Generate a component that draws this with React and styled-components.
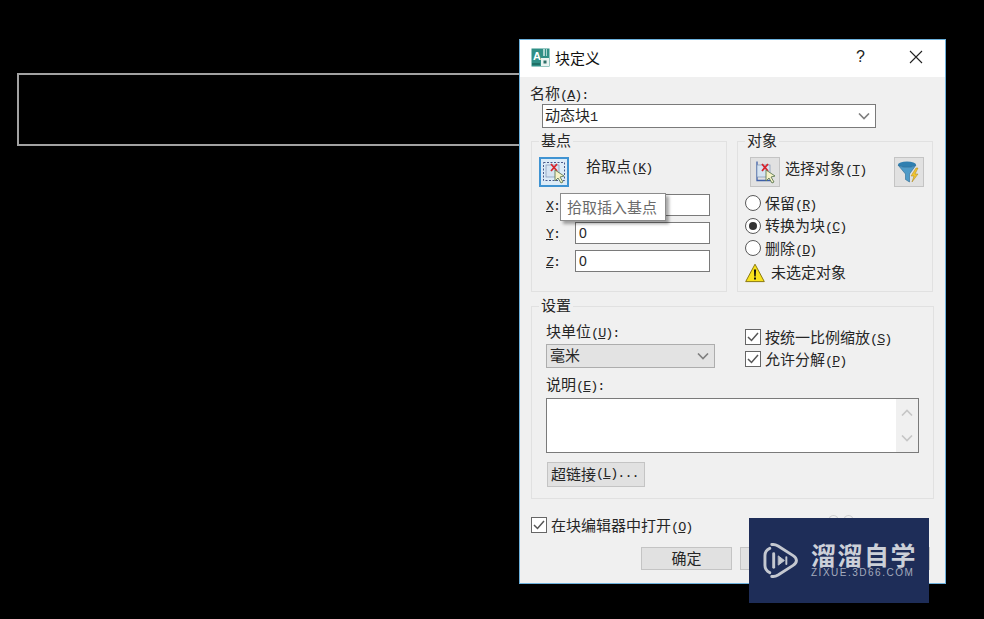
import styled, { createGlobalStyle } from "styled-components";

const GlobalStyle = createGlobalStyle`
  html, body {
    margin: 0;
    height: 100%;
    background: #000;
  }
  * {
    box-sizing: border-box;
  }
`;

const Canvas = styled.div`
  position: relative;
  width: 984px;
  height: 619px;
  overflow: hidden;
  background: #000;
  font-family: "Noto Sans CJK SC", "Liberation Sans", sans-serif;
  font-size: 15px;
  color: #262626;
`;
const DrawnRect = styled.div`
  position: absolute;
  left: 17px;
  top: 73px;
  width: 520px;
  height: 73px;
  border: 2px solid #a2a2a2;
`;

// dialog window
const Dialog = styled.div`
  position: absolute;
  left: 519px;
  top: 39px;
  width: 427px;
  height: 545px;
  border: 1px solid #6db1dc;
  background: #f0f0f0;
`;
const TitleBar = styled.div`
  display: flex;
  align-items: center;
  height: 37px;
  padding: 0 0 3px 11px;
  background: #fff;
`;
const TitleText = styled.span`
  margin-left: 5px;
  color: #111;
`;
const HelpMark = styled.span`
  margin-left: auto;
  width: 14px;
  font-family: "Liberation Sans", sans-serif;
  font-size: 16px;
  color: #222;
`;
const CloseMark = styled.span`
  display: flex;
  margin: 0 22px 0 39px;
`;
const Body = styled.div`
  padding: 7px 0 0 10px;
`;
const Line = styled.div`
  height: 20px;
  line-height: 18px;
  white-space: nowrap;
`;
const Label = styled.span`
  margin-top: -2px;
  white-space: nowrap;
`;
const Hot = styled.span`
  font-family: "Liberation Mono", monospace;
  font-size: 13.5px;
  letter-spacing: -1px;
`;
const Combo = styled.div`
  display: flex;
  align-items: center;
  justify-content: space-between;
  width: ${(p) => p.$width}px;
  height: 24px;
  margin: ${(p) => p.$top || 0}px 0 0 ${(p) => p.$indent || 0}px;
  padding: 0 5px 0 ${(p) => (p.$flat ? 3 : 2)}px;
  border: 1px solid ${(p) => (p.$flat ? "#adadad" : "#7a7a7a")};
  background: ${(p) => (p.$flat ? "#e3e3e3" : "#fff")};
`;
const ComboText = styled.span`
  margin-top: -3px;
`;
const Columns = styled.div`
  display: grid;
  grid-template-columns: 196px 196px;
  column-gap: 10px;
  margin: 13px 0 0 1px;
`;
const Group = styled.div`
  position: relative;
  height: 151px;
  padding: 15px 0 0 7px;
  border: 1px solid #e1e1e1;
`;
const Legend = styled.span`
  position: absolute;
  left: 7px;
  top: -12px;
  padding: 0 2px;
  line-height: 20px;
  background: #f0f0f0;
`;
const IconRow = styled.div`
  display: flex;
  align-items: center;
  height: 30px;
`;
const IconButton = styled.div`
  display: flex;
  align-items: center;
  justify-content: center;
  flex: none;
  width: 30px;
  height: 30px;
  margin-left: ${(p) => p.$indent || 0}px;
  border: ${(p) => (p.$active ? "2px solid #3f93d2" : "1px solid #c4c4c4")};
  background: ${(p) => (p.$active ? "#dcebf7" : "#e1e1e1")};
`;
const RowLabel = styled.span`
  margin-left: ${(p) => p.$gap}px;
  margin-top: ${(p) => p.$rise}px;
  white-space: nowrap;
`;
const FilterSlot = styled.div`
  margin: 0 8px 0 auto;
`;
const Coords = styled.div`
  display: grid;
  grid-template-columns: 29px 135px;
  grid-auto-rows: 22px;
  row-gap: 6px;
  align-items: center;
  margin: 7px 0 0 7px;
`;
const CoordLabel = styled(Hot)`
  margin-top: 3px;
`;
const Input = styled.div`
  height: 22px;
  padding-left: 3px;
  border: 1px solid #7a7a7a;
  background: #fff;
  line-height: 20px;
  font-family: "Liberation Sans", sans-serif;
  font-size: 14px;
`;
const Tooltip = styled.div`
  position: absolute;
  left: 28px;
  top: 51px;
  width: 106px;
  height: 28px;
  border: 1px solid #8c8c8c;
  background: #fff;
  padding-left: 6px;
  line-height: 25px;
  color: #6b6b6b;
  white-space: nowrap;
  box-shadow: 3px 3px 3px rgba(0, 0, 0, 0.35);
`;
const Options = styled.div`
  display: flex;
  flex-direction: column;
  margin-top: 5px;
`;
const OptionRow = styled.div`
  display: flex;
  align-items: center;
  gap: 4px;
  height: 22.5px;
`;
const Radio = styled.span`
  display: flex;
  align-items: center;
  justify-content: center;
  width: 16px;
  height: 16px;
  border: 1px solid #5a5a5a;
  border-radius: 50%;
  background: #fff;
  &::after {
    content: "";
    display: ${(p) => (p.$on ? "block" : "none")};
    width: 8px;
    height: 8px;
    border-radius: 50%;
    background: #333;
  }
`;
const WarnRow = styled.div`
  display: flex;
  align-items: center;
  gap: 6px;
  height: 20px;
  margin-top: 3px;
`;
const Settings = styled.div`
  position: relative;
  width: 403px;
  height: 193px;
  margin: 14px 0 0 1px;
  padding: 15px 0 0 14px;
  border: 1px solid #e1e1e1;
`;
const SettingsTop = styled.div`
  display: grid;
  grid-template-columns: 169px 170px;
  column-gap: 30px;
`;
const CheckList = styled.div`
  display: flex;
  flex-direction: column;
  gap: 2px;
  padding-top: 5px;
`;
const CheckRow = styled.div`
  display: flex;
  align-items: center;
  gap: 4px;
  height: 20px;
`;
const Check = styled.span`
  display: flex;
  flex: none;
  width: 16px;
  height: 16px;
  border: 1px solid #666;
  background: #fff;
`;
const DescLabel = styled(Line)`
  margin: 6px 0 3px;
`;
const TextArea = styled.div`
  display: flex;
  justify-content: flex-end;
  width: 373px;
  height: 55px;
  border: 1px solid #7a7a7a;
  background: #fff;
`;
const ScrollTrack = styled.div`
  display: flex;
  flex-direction: column;
  align-items: center;
  justify-content: space-between;
  width: 22px;
  padding: 10px 0;
  background: #f0f0f0;
`;
const PushButton = styled.div`
  display: flex;
  align-items: center;
  justify-content: ${(p) => (p.$left ? "flex-start" : "center")};
  width: ${(p) => p.$width}px;
  height: ${(p) => p.$height}px;
  margin: ${(p) => (p.$left ? "9px 0 0 1px" : "0")};
  padding: 0 0 2px ${(p) => (p.$left ? 3 : 0)}px;
  border: 1px solid #c4c4c4;
  background: #e1e1e1;
  white-space: nowrap;
`;
const BottomRow = styled.div`
  display: flex;
  align-items: center;
  gap: 4px;
  height: 20px;
  margin: 16px 0 0 1px;
`;
const FaintDots = styled.div`
  display: flex;
  gap: 4px;
  margin: -9px 0 0 132px;
`;
const FaintDot = styled.span`
  width: 11px;
  height: 12px;
  border: 1px solid #cfcfcf;
  border-radius: 50%;
`;
const ButtonRow = styled.div`
  display: flex;
  gap: 8px;
  margin: 12px 0 0 111px;
`;

// watermark
const Watermark = styled.div`
  position: absolute;
  left: 749px;
  top: 518px;
  display: flex;
  align-items: center;
  width: 180px;
  height: 85px;
  padding-left: 14px;
  background: #1e2d58;
`;
const Brand = styled.div`
  display: flex;
  flex-direction: column;
  margin: -2px 0 0 13px;
`;
const BrandName = styled.span`
  font-size: 25px;
  font-weight: 700;
  line-height: 26px;
  letter-spacing: 1.5px;
  color: #ccd0d8;
  white-space: nowrap;
`;
const BrandUrl = styled.span`
  font-family: "Liberation Sans", sans-serif;
  font-size: 10px;
  line-height: 12px;
  letter-spacing: 1.5px;
  color: #a4abbd;
  white-space: nowrap;
`;

const Chevron = ({ dir = "down", faint }) => (
  <svg width="12" height="7" viewBox="0 0 12 7" fill="none" stroke={faint ? "#c6c6c6" : "#7f7f7f"} strokeWidth="1.6">
    <path d={dir === "up" ? "M1 6.500l5-5 5 5" : "M1 .5l5 5 5-5"} />
  </svg>
);

const CheckMark = () => (
  <svg width="14" height="14" viewBox="0 0 14 14" fill="none" stroke="#555" strokeWidth="1.5">
    <path d="M2 7l3.500 3.500L12 3" />
  </svg>
);

const AppIcon = () => (
  <svg width="19" height="19" viewBox="0 0 19 19">
    <rect x="0.5" y="0.5" width="18" height="18" fill="#2f8f86" />
    <path d="M12 1h2v7h-2zM15 1h1v7h-1z" fill="#a8d4cf" />
    <text x="2" y="12" fontFamily="Liberation Sans" fontWeight="700" fontSize="11" fill="#fff">A</text>
    <rect x="10" y="10" width="8" height="8" fill="#e9f3f1" />
    <rect x="12.500" y="12.500" width="3" height="3" fill="#2f6f68" />
    <path d="M1 15h8v2H1z" fill="#1f6f66" />
  </svg>
);

const PickIcon = ({ dashed }) => (
  <svg width="26" height="26" viewBox="0 0 26 26" fill="none">
    {dashed ? (
      <rect x="2.500" y="3.500" width="21" height="18" stroke="#4a5a8a" strokeDasharray="2 1.500" />
    ) : (
      <path d="M5 2.500v19h15" stroke="#3c5fa8" strokeWidth="1.300" />
    )}
    <rect x="5" y="6" width="13" height="12" fill="#d6e4f2" stroke="#7d93b5" strokeWidth="0.7" />
    <path d="M10 5l6 7M16 5l-6 7" stroke="#d8252c" strokeWidth="1.800" />
    <path d="M14 11l0 11 3-3 3 5 2-1-3-5 4-1z" fill="#f6f2c8" stroke="#5f7a52" strokeWidth="0.9" />
  </svg>
);

const FilterIcon = () => (
  <svg width="26" height="26" viewBox="0 0 26 26">
    <ellipse cx="11" cy="5.500" rx="9" ry="3" fill="#2f7fb0" />
    <path d="M2 6c3 3 15 3 18 0l-6.500 9v8l-4-2.500V15z" fill="#4f9bc8" stroke="#2a6a94" strokeWidth="0.6" />
    <path d="M20 9l-5 8h3l-2 6 6-8h-3l3-6z" fill="#f2c530" stroke="#a98416" strokeWidth="0.5" />
  </svg>
);

const WarnIcon = () => (
  <svg width="20" height="20" viewBox="0 0 20 20">
    <path d="M10 1.200L19.300 18.600H0.700z" fill="#f8e21c" stroke="#8c7a10" strokeWidth="1" strokeLinejoin="round" />
    <path d="M8.900 6.500h2.200l-.4 7h-1.400z" fill="#111" />
    <rect x="9" y="14.500" width="2" height="2" fill="#111" />
  </svg>
);

const PlayLogo = () => (
  <svg width="35" height="37" viewBox="0 0 36 38" fill="none" stroke="#c4c8d0" strokeWidth="3" strokeLinejoin="round" strokeLinecap="round">
    <path d="M9 2.500h1.500c2 0 3 .4 5 1.600L31 14c4.500 3 4.500 7 0 10L15.500 34c-2 1.200-3 1.500-5 1.500H9" />
    <path d="M7 6.500C3.500 8 2 10.500 2 14v10c0 3.500 1.500 6 5 7.500" />
    <path d="M11 12v14" />
    <path d="M16 14.500l6 4.500-6 4.500z" fill="#c4c8d0" strokeWidth="1" />
    <path d="M24 15.500v7" strokeWidth="2" />
  </svg>
);

export default function App() {
  return (
    <Canvas>
      <GlobalStyle />
      <DrawnRect />
      <Dialog>
        <TitleBar>
          <AppIcon />
          <TitleText>块定义</TitleText>
          <HelpMark>?</HelpMark>
          <CloseMark>
            <svg width="14" height="14" viewBox="0 0 14 14" stroke="#222" strokeWidth="1.100">
              <path d="M1 1l12 12M13 1L1 13" />
            </svg>
          </CloseMark>
        </TitleBar>
        <Body>
          <Line>
            名称<Hot>(<u>A</u>):</Hot>
          </Line>
          <Combo $width={334} $indent={12}>
            <ComboText>动态块<Hot>1</Hot></ComboText>
            <Chevron />
          </Combo>
          <Columns>
            <Group>
              <Legend>基点</Legend>
              <IconRow>
                <IconButton $active>
                  <PickIcon dashed />
                </IconButton>
                <RowLabel $gap={17} $rise={-14}>
                  拾取点<Hot>(<u>K</u>)</Hot>
                </RowLabel>
              </IconRow>
              <Coords>
                <CoordLabel><u>X</u>:</CoordLabel>
                <Input />
                <CoordLabel><u>Y</u>:</CoordLabel>
                <Input>0</Input>
                <CoordLabel><u>Z</u>:</CoordLabel>
                <Input>0</Input>
              </Coords>
              <Tooltip>拾取插入基点</Tooltip>
            </Group>
            <Group>
              <Legend>对象</Legend>
              <IconRow>
                <IconButton $indent={5}>
                  <PickIcon />
                </IconButton>
                <RowLabel $gap={5} $rise={-10}>
                  选择对象<Hot>(<u>T</u>)</Hot>
                </RowLabel>
                <FilterSlot>
                  <IconButton>
                    <FilterIcon />
                  </IconButton>
                </FilterSlot>
              </IconRow>
              <Options>
                <OptionRow>
                  <Radio />
                  <Label>保留<Hot>(<u>R</u>)</Hot></Label>
                </OptionRow>
                <OptionRow>
                  <Radio $on />
                  <Label>转换为块<Hot>(<u>C</u>)</Hot></Label>
                </OptionRow>
                <OptionRow>
                  <Radio />
                  <Label>删除<Hot>(<u>D</u>)</Hot></Label>
                </OptionRow>
              </Options>
              <WarnRow>
                <WarnIcon />
                <Label>未选定对象</Label>
              </WarnRow>
            </Group>
          </Columns>
          <Settings>
            <Legend>设置</Legend>
            <SettingsTop>
              <div>
                <Line>
                  块单位<Hot>(<u>U</u>):</Hot>
                </Line>
                <Combo $width={169} $flat $top={2}>
                  <ComboText>毫米</ComboText>
                  <Chevron />
                </Combo>
              </div>
              <CheckList>
                <CheckRow>
                  <Check><CheckMark /></Check>
                  <Label>按统一比例缩放<Hot>(<u>S</u>)</Hot></Label>
                </CheckRow>
                <CheckRow>
                  <Check><CheckMark /></Check>
                  <Label>允许分解<Hot>(<u>P</u>)</Hot></Label>
                </CheckRow>
              </CheckList>
            </SettingsTop>
            <DescLabel>
              说明<Hot>(<u>E</u>):</Hot>
            </DescLabel>
            <TextArea>
              <ScrollTrack>
                <Chevron dir="up" faint />
                <Chevron faint />
              </ScrollTrack>
            </TextArea>
            <PushButton $width={98} $height={25} $left>
              超链接<Hot>(<u>L</u>)...</Hot>
            </PushButton>
          </Settings>
          <BottomRow>
            <Check><CheckMark /></Check>
            <Label>在块编辑器中打开<Hot>(<u>O</u>)</Hot></Label>
            <FaintDots>
              <FaintDot />
              <FaintDot />
            </FaintDots>
          </BottomRow>
          <ButtonRow>
            <PushButton $width={91} $height={23}>确定</PushButton>
            <PushButton $width={91} $height={23} />
            <PushButton $width={91} $height={23} />
          </ButtonRow>
        </Body>
      </Dialog>
      <Watermark>
        <PlayLogo />
        <Brand>
          <BrandName>溜溜自学</BrandName>
          <BrandUrl>ZIXUE.3D66.COM</BrandUrl>
        </Brand>
      </Watermark>
    </Canvas>
  );
}
